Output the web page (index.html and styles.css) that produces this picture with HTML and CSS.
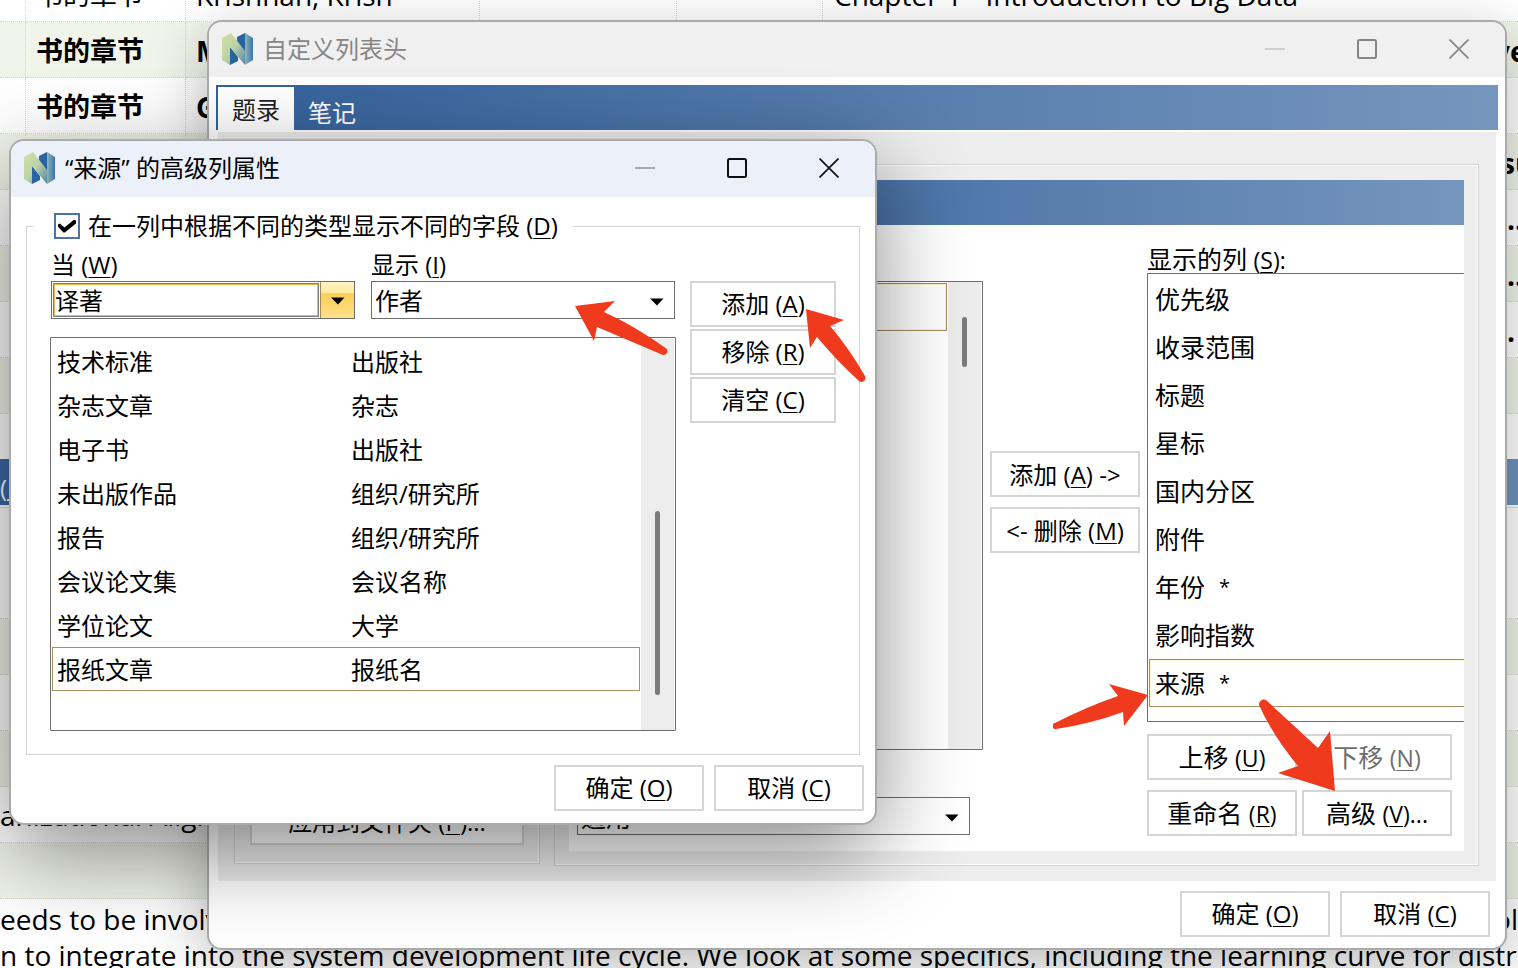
FILE: index.html
```html
<!DOCTYPE html>
<html lang="zh-CN">
<head>
<meta charset="utf-8">
<title>自定义列表头</title>
<link rel="stylesheet" href="styles.css">
</head>
<body>
<svg class="defs" aria-hidden="true">
  <defs>
    <linearGradient id="leaf" x1="0" y1="0" x2="1" y2="1"><stop offset="0" stop-color="#d0e0a4"/><stop offset=".5" stop-color="#bdd2a6"/><stop offset="1" stop-color="#4d86ad"/></linearGradient>
    <linearGradient id="sea" x1="0" y1="0" x2="1" y2="0"><stop offset="0" stop-color="#8fb3b5"/><stop offset="1" stop-color="#3a74b0"/></linearGradient>
    <symbol id="logo" viewBox="0 0 32 32">
      <path fill="#2a64a0" d="M15 4l8-4v20l-8-11zM8 14l8 10v4l-8 4z"/>
      <path fill="url(#sea)" d="M23 0l8 5v22l-8 5z"/>
      <path fill="url(#leaf)" d="M0 5l9-5 14 18v14L8 14v18l-8-5z"/>
    </symbol>
    <symbol id="min" viewBox="0 0 20 20"><path d="M0 10h20" stroke="currentColor" stroke-width="2" opacity=".3"/></symbol>
    <symbol id="max" viewBox="0 0 20 20"><rect x="1" y="1" width="18" height="18" rx="1.5" fill="none" stroke="currentColor" stroke-width="2"/></symbol>
    <symbol id="close" viewBox="0 0 20 20"><path d="M.5 .5l19 19M19.5 .5l-19 19" stroke="currentColor" stroke-width="1.7"/></symbol>
    <symbol id="caret" viewBox="0 0 14 8"><path d="M0 .5h13.500L7 7.500z"/></symbol>
  </defs>
</svg>
<div class="desktop">
  <main class="library">
    <table class="refs">
      <colgroup><col class="c-mark"><col class="c-type"><col class="c-author"><col class="c-year"><col class="c-pub"><col><col class="c-end"></colgroup>
      <tr><td></td><td>书的章节</td><td>Krishnan, Krish</td><td></td><td></td><td>Chapter 1 - Introduction to Big Data</td><td></td></tr>
      <tr class="unread"><td></td><td>书的章节</td><td>M</td><td></td><td></td><td></td><td>ve</td></tr>
      <tr class="unread"><td></td><td>书的章节</td><td>G</td><td></td><td></td><td></td><td></td></tr>
      <tr class="unread"><td></td><td></td><td></td><td></td><td></td><td></td><td class="late">su</td></tr>
      <tr class="unread"><td></td><td></td><td></td><td></td><td></td><td></td><td class="later">..</td></tr>
      <tr class="unread"><td></td><td></td><td></td><td></td><td></td><td></td><td class="later">..</td></tr>
      <tr class="unread"><td></td><td></td><td></td><td></td><td></td><td></td><td class="later">.</td></tr>
      <tr><td></td><td></td><td></td><td></td><td></td><td></td><td></td></tr>
      <tr><td></td><td></td><td></td><td></td><td></td><td></td><td></td></tr>
    </table>
    <div class="splitter">(<u>L</u></div>
    <div class="fields">
      <div class="field blank"></div>
      <div class="field"></div>
      <div class="field tint"></div>
      <div class="field"></div>
      <div class="field tint"></div>
      <div class="field">anizational Alignm</div>
      <div class="field tint"></div>
    </div>
    <div class="abstract">
      <div class="split-line"><span>eeds to be involv</span><span>ol</span></div>
      <div>n to integrate into the system development life cycle. We look at some specifics, including the learning curve for distrib</div>
    </div>
  </main>

  <section class="window columns-window inactive">
    <header class="titlebar">
      <svg class="logo"><use href="#logo"/></svg>
      <h1>自定义列表头</h1>
      <div class="controls">
        <button aria-label="最小化"><svg><use href="#min"/></svg></button>
        <button aria-label="最大化"><svg><use href="#max"/></svg></button>
        <button aria-label="关闭"><svg><use href="#close"/></svg></button>
      </div>
    </header>
    <nav class="tabs"><button class="tab active">题录</button><button class="tab">笔记</button></nav>
    <div class="panel">
      <div class="group folders"><button class="btn wide">应用到文件夹 (<u>P</u>)...</button></div>
      <div class="group layout">
        <div class="sheet">
          <div class="sheet-head"></div>
          <div class="picker">
            <div class="available">
              <div class="listbox avail-list">
                <div class="avail-row"></div>
                <div class="scroll"><span class="thumb short"></span></div>
              </div>
              <div class="combo">
                <select aria-label="布局"><option>通用</option></select>
                <svg class="caret"><use href="#caret"/></svg>
              </div>
            </div>
            <div class="move">
              <button class="btn">添加 (<u>A</u>) -&gt;</button>
              <button class="btn">&lt;- 删除 (<u>M</u>)</button>
            </div>
            <div class="shown">
              <div class="shown-label" id="shown-label">显示的列 <span class="key">(<u>S</u>):</span></div>
              <ul class="listbox shown-list" aria-labelledby="shown-label">
                <li>优先级</li><li>收录范围</li><li>标题</li><li>星标</li><li>国内分区</li><li>附件</li>
                <li>年份<span class="star">*</span></li><li>影响指数</li><li class="selected">来源<span class="star">*</span></li>
              </ul>
              <div class="order">
                <button class="btn">上移 <span class="key">(<u>U</u>)</span></button>
                <button class="btn" disabled>下移 <span class="key">(<u>N</u>)</span></button>
                <button class="btn">重命名 <span class="key">(<u>R</u>)</span></button>
                <button class="btn">高级 <span class="key">(<u>V</u>)...</span></button>
              </div>
            </div>
          </div>
        </div>
      </div>
    </div>
    <footer class="actions"><button class="btn">确定 (<u>O</u>)</button><button class="btn">取消 (<u>C</u>)</button></footer>
  </section>

  <section class="window advanced-window">
    <header class="titlebar">
      <svg class="logo"><use href="#logo"/></svg>
      <h1>“来源” 的高级列属性</h1>
      <div class="controls">
        <button aria-label="最小化"><svg><use href="#min"/></svg></button>
        <button aria-label="最大化"><svg><use href="#max"/></svg></button>
        <button aria-label="关闭"><svg><use href="#close"/></svg></button>
      </div>
    </header>
    <fieldset class="rules">
      <legend><label class="check"><input type="checkbox" checked>在一列中根据不同的类型显示不同的字段 (<u>D</u>)</label></legend>
      <div class="rules-grid">
        <div class="rules-main">
          <div class="pair">
            <div>
              <label for="when">当 (<u>W</u>)</label>
              <div class="combo focused">
                <select id="when"><option>译著</option></select>
                <span class="drop"><svg class="caret"><use href="#caret"/></svg></span>
              </div>
            </div>
            <div>
              <label for="show">显示 (<u>I</u>)</label>
              <div class="combo">
                <select id="show"><option>作者</option></select>
                <svg class="caret"><use href="#caret"/></svg>
              </div>
            </div>
          </div>
          <div class="listbox map-list">
            <table class="map">
              <tr><td>技术标准</td><td>出版社</td></tr>
              <tr><td>杂志文章</td><td>杂志</td></tr>
              <tr><td>电子书</td><td>出版社</td></tr>
              <tr><td>未出版作品</td><td>组织/研究所</td></tr>
              <tr><td>报告</td><td>组织/研究所</td></tr>
              <tr><td>会议论文集</td><td>会议名称</td></tr>
              <tr><td>学位论文</td><td>大学</td></tr>
              <tr class="selected"><td>报纸文章</td><td>报纸名</td></tr>
            </table>
            <div class="scroll"><span class="thumb long"></span></div>
          </div>
        </div>
        <div class="edit">
          <button class="btn">添加 (<u>A</u>)</button>
          <button class="btn">移除 (<u>R</u>)</button>
          <button class="btn">清空 (<u>C</u>)</button>
        </div>
      </div>
    </fieldset>
    <footer class="actions"><button class="btn">确定 (<u>O</u>)</button><button class="btn">取消 (<u>C</u>)</button></footer>
    <svg class="arrow arrow-show" viewBox="0 0 94 55"><path d="M0 5L40 0 29 11Q60 25 92 48A4 4 0 0 1 88 54Q55 40 22 26L19 40z"/></svg>
    <svg class="arrow arrow-add" viewBox="0 0 60 74"><path d="M0 0L38 11 24 17Q43 39 59 67A4 4 0 0 1 53 72Q32 53 11 28L4 39z"/></svg>
  </section>
  <svg class="arrow arrow-source" viewBox="0 0 96 46"><path d="M95 11L56 0 65 12Q33 23 2 39A3 3 0 0 0 3 45Q37 40 70 28L71 42z"/></svg>
  <svg class="arrow arrow-more" viewBox="0 0 79 95"><path d="M77 94L72 34 60 51 8 3A5 5 0 0 0 1 8Q15 39 40 69L20 76z"/></svg>
</div>
</body>
</html>
```
FILE: styles.css
```css
* { box-sizing: border-box; }
html, body { margin: 0; height: 100%; }
body {
  font: 24px/32px "Open Sans", "Noto Sans CJK SC", sans-serif;
  color: #000;
  background: #fff;
  overflow: hidden;
}
button, select, input { font: inherit; color: inherit; margin: 0; }
.defs { position: absolute; width: 0; height: 0; }
.desktop { position: relative; height: 100vh; overflow: hidden; }

/* library view behind the dialogs */
.library { font-size: 28px; line-height: 36px; }
.refs { width: 100%; margin-top: -34px; table-layout: fixed; border-collapse: separate; border-spacing: 0; }
.refs td { height: 56px; padding: 2px 0 0 10px; white-space: nowrap; border-bottom: 1px dotted #d4d4d4; border-right: 1px dotted #d4d4d4; }
.refs td:nth-child(2) { font-size: 27px; }
.refs td:nth-child(6) { padding-left: 11px; border-right: 0; }
.refs tr:nth-child(even) td { background: #f1f4e9; }
.refs tr:last-child td { height: 45px; border-bottom: 0; }
.refs td:last-child { padding-left: 0; border-right: 0; }
.refs td.late { padding-left: 7px; }
.refs td.later { padding-left: 13px; }
.unread { font-weight: 700; }
.c-mark { width: 26px; }
.c-type { width: 160px; }
.c-author { width: 294px; }
.c-year { width: 197px; }
.c-pub { width: 146px; }
.c-end { width: 24px; }
.splitter { height: 46px; padding-top: 10px; font-size: 24px; line-height: 38px; color: #fff; background: linear-gradient(90deg, #3c6aa8, #6e93bd); }
.fields { padding-top: 2px; }
.field { height: 56px; line-height: 56px; white-space: nowrap; border-bottom: 1px dotted #d4d4d4; }
.field.tint { background: #f1f4e9; }
.field.blank { border-top: 1px solid #ddd; border-bottom: 0; }
.abstract { padding-top: 2px; white-space: nowrap; }
.split-line { display: flex; justify-content: space-between; }

/* windows */
.window { position: absolute; background: #fff; border: 2px solid #aaa; border-radius: 15px; }
.columns-window { left: 207px; right: 11px; top: 20px; box-shadow: 0 16px 60px rgba(0,0,0,.28); }
.advanced-window { left: 9px; top: 139px; width: 868px; box-shadow: 0 28px 90px rgba(0,0,0,.46); }
.titlebar { display: flex; align-items: center; height: 56px; padding: 0 36px 2px 13px; background: #ebf0f9; border-radius: 13px 13px 0 0; }
.inactive .titlebar { height: 55px; background: #f0f0f0; color: #868686; }
.titlebar h1 { flex: 1; margin: 0 0 0 9px; font-size: 24px; font-weight: 400; }
.logo { width: 32px; height: 32px; }
.controls { display: flex; gap: 72px; color: #111; }
.inactive .controls { color: #868686; }
.controls button { display: flex; width: 20px; height: 20px; padding: 0; border: 0; background: none; }
.controls svg { width: 20px; height: 20px; }

/* shared controls */
.btn { height: 46px; width: 150px; padding: 0; border: 2px solid #d5d5d5; background: #fff; white-space: nowrap; }
.btn:disabled { color: #6d6d6d; }
.btn u, label u, .shown-label u { text-underline-offset: 3px; text-decoration-thickness: 1px; }
.actions { display: flex; justify-content: flex-end; gap: 10px; padding: 10px 15px 11px 0; }
.advanced-window .actions { padding: 10px 11px 12px 0; }
.combo { position: relative; height: 38px; border: 1px solid #6e6e6e; background: #fff; }
.combo select { display: block; width: 100%; height: 100%; padding: 0 36px 0 3px; border: 0; border-radius: 0; background: transparent; appearance: none; outline: 0; }
.caret { width: 14px; height: 8px; }
.combo > .caret { position: absolute; right: 10px; top: 16px; pointer-events: none; }
.focused::before { content: ""; position: absolute; inset: 1px 35px 1px 1px; border: 1px solid #7d7d7d; box-shadow: inset 0 0 0 1px #f0b944; pointer-events: none; }
.drop { position: absolute; top: 0; right: 0; bottom: 0; width: 34px; display: flex; align-items: center; justify-content: center; padding-top: 2px; border-left: 1px solid #a08a5a; background: linear-gradient(#fff3c4 0, #fde9a0 30%, #fbcf58 31%, #ffe08a 100%); pointer-events: none; }
.listbox { display: flex; border: 1px solid #6e6e6e; border-radius: 1px; background: #fff; }
.scroll { width: 34px; background: #ededed; border-right: 1px solid #fff; }
.thumb { display: block; width: 5px; margin-left: 14px; border-radius: 3px; background: #7a7a7a; }
.thumb.short { height: 50px; margin-top: 35px; }
.thumb.long { height: 184px; margin-top: 172px; }

/* column chooser */
.tabs { display: flex; height: 45px; margin: 8px 7px 0; padding: 2px 0 0 2px; background: linear-gradient(90deg, #34619b, #7596bd); }
.tab { height: 43px; padding: 9px 14px 0; border: 0; color: #fff; background: none; line-height: 34px; }
.tab.active { padding-top: 3px; color: #222; background: #fff; }
.panel { display: flex; gap: 14px; margin: 2px 9px 0; padding: 32px 17px 15px 16px; background: #ededed; }
.group { border: 1px solid #d3d3d3; box-shadow: inset -1px -1px #fff, inset 0 1px #fff; }
.folders { flex: 0 0 306px; display: flex; flex-direction: column; justify-content: flex-end; margin-bottom: 2px; padding: 0 15px 18px; }
.btn.wide { width: auto; background: #fff; }
.layout { flex: 1; min-width: 0; padding: 15px 14px 14px; }
.sheet { background: #fff; overflow: hidden; }
.sheet-head { height: 45px; background: linear-gradient(90deg, #34619b, #7596bd); }
.picker { display: grid; grid-template-columns: 1fr 150px 317px; gap: 7px; padding: 0 0 15px 8px; font-size: 25px; }
.avail-list { height: 469px; margin: 56px 0 47px; }
.avail-row { flex: 1; height: 48px; margin: 1px 1px 0; border: 1px solid #a3905c; box-shadow: inset 0 0 0 1px #fff6cc; }
.available .combo { margin-right: 13px; }
.move { display: flex; flex-direction: column; gap: 10px; padding-top: 226px; }
.move .btn { font-size: 24px; padding-top: 2px; }
.shown-label { padding-top: 20px; line-height: 28px; }
.key { font-size: 23px; line-height: 20px; }
.shown-list { flex-direction: column; height: 449px; margin: 0; padding: 1px 0 0 1px; border-right: 0; list-style: none; }
.shown-list li { height: 48px; padding-left: 6px; line-height: 48px; }
.shown-list .selected { margin-right: -1px; padding-left: 5px; border: 1px solid #a3905c; border-right: 0; box-shadow: inset 1px 1px #fff6cc; line-height: 46px; }
.star { margin-left: 14px; font-size: 20px; line-height: 20px; vertical-align: 3px; }
.order { display: grid; grid-template-columns: 150px 150px; gap: 10px 5px; padding-top: 12px; }

/* advanced column dialog */
.rules { margin: 13px 15px 0; padding: 0 23px 23px; border: 1px solid #d5d5d5; }
.rules legend { margin-left: -16px; padding: 0 15px 0 20px; }
.check { display: flex; align-items: center; white-space: pre; }
.check input { appearance: none; width: 26px; height: 26px; margin-right: 8px; border: 2px solid #4a73ab; background: #fff; display: grid; place-items: center; }
.check input:checked::before { content: ""; width: 18px; height: 13px; background: #000; clip-path: polygon(0 38%, 10% 30%, 36% 62%, 90% 0, 100% 8%, 100% 30%, 38% 100%, 30% 100%, 0 55%); }
.rules-grid { display: grid; grid-template-columns: 1fr 146px; gap: 14px; padding-top: 7px; }
.pair { display: grid; grid-template-columns: 1fr 1fr; gap: 16px; padding: 0 1px; }
.pair label { display: block; line-height: 32px; }
.combo select { padding-top: 2px; }
.map-list { height: 394px; margin-top: 18px; padding-top: 1px; }
.map { flex: 1; align-self: flex-start; margin: 0 1px; border-spacing: 0; table-layout: fixed; }
.map td { height: 44px; padding: 1px 0 0 5px; width: 50%; }
.map .selected { outline: 1px solid #a3905c; outline-offset: -1px; }
.edit { display: flex; flex-direction: column; gap: 2px; padding-top: 32px; }
.edit .btn { width: 146px; }

/* pointer arrows over the dialogs */
.arrow { position: absolute; fill: #f03a1d; pointer-events: none; }
.arrow-show { left: 564px; top: 160px; width: 94px; height: 55px; }
.arrow-add { left: 795px; top: 168px; width: 60px; height: 74px; }
.arrow-source { left: 1053px; top: 684px; width: 96px; height: 46px; }
.arrow-more { left: 1258px; top: 697px; width: 79px; height: 95px; }
```
